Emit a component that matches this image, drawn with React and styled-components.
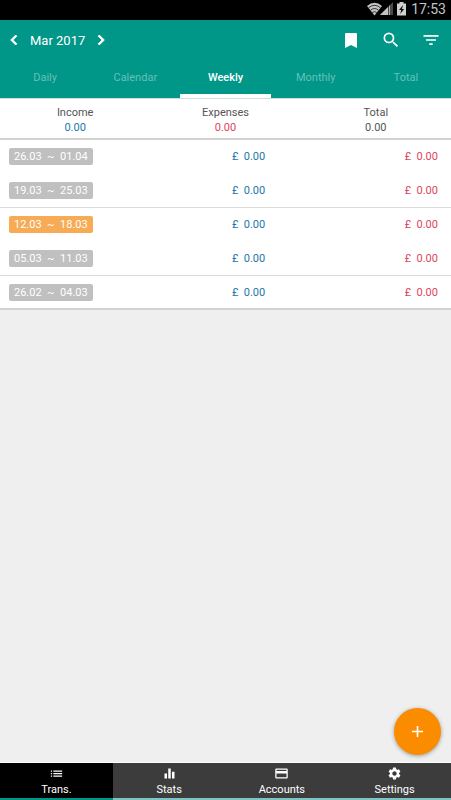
import React, { useState } from "react";
import styled, { createGlobalStyle } from "styled-components";
import {
  MdAdd,
  MdChevronLeft,
  MdChevronRight,
  MdCreditCard,
  MdEqualizer,
  MdFilterList,
  MdList,
  MdSearch,
  MdSettings,
} from "react-icons/md";

const GlobalStyle = createGlobalStyle`
  * {
    box-sizing: border-box;
  }

  body {
    margin: 0;
    background: #efefef;
    color: #555;
    font-family: Roboto, "Liberation Sans", sans-serif;
    font-size: 11px;
  }

  button {
    padding: 0;
    border: 0;
    background: none;
    color: inherit;
    font: inherit;
    cursor: pointer;
  }
`;

const Page = styled.div`
  display: flex;
  flex-direction: column;
  min-height: 100vh;
`;

const StatusBar = styled.div`
  display: flex;
  align-items: center;
  justify-content: flex-end;
  height: 20px;
  padding: 0 5px 2px 0;
  background: #000;
  color: #c4c4c4;
  font-size: 14px;

  svg {
    display: block;
  }
`;

const Clock = styled.time`
  margin-left: 4px;
`;

const Header = styled.header`
  background: #009688;
  color: #fff;
  border-bottom: 1px solid #cfdfdc;
`;

const Toolbar = styled.div`
  display: flex;
  align-items: center;
  justify-content: space-between;
  height: 40px;
  padding: 0 10px 0 4px;
`;

const MonthPicker = styled.div`
  display: flex;
  align-items: center;
  gap: 6px;
  font-size: 13px;

  path:last-child {
    stroke: #fff;
    stroke-width: 1;
  }
`;

const Actions = styled.div`
  display: flex;
  gap: 20px;
`;

const IconButton = styled.button`
  display: flex;
  align-items: center;
  justify-content: center;
  width: 20px;
  height: 20px;
  font-size: 20px;

  svg {
    flex: none;
  }
`;

const Tabs = styled.nav`
  display: grid;
  grid-template-columns: repeat(5, 1fr);
`;

const Tab = styled.button`
  height: 38px;
  border-bottom: 4px solid ${(props) => (props.$active ? "#fff" : "transparent")};
  color: ${(props) => (props.$active ? "#fff" : "#66c0b8")};
  font-weight: ${(props) => (props.$active ? 500 : 400)};
`;

const Summary = styled.dl`
  display: grid;
  grid-template-columns: repeat(3, 1fr);
  height: 41px;
  margin: 0;
  padding-top: 6px;
  background: #fff;
  border-bottom: 2px solid #d2d2d2;
  line-height: 15px;
  text-align: center;

  dd {
    margin: 0;
  }
`;

const Amount = styled.span`
  color: ${(props) => props.$color};
  text-align: right;
  white-space: pre;
`;

const Weeks = styled.ul`
  margin: 0;
  padding: 0;
  background: #fff;
  border-bottom: 2px solid #d2d2d2;
  list-style: none;
`;

const Week = styled.li`
  display: grid;
  grid-template-columns: 3fr 2fr;
  column-gap: 2px;
  align-items: center;
  height: 34px;
  padding: 0 13px 0 9px;
  border-bottom: 1px solid ${(props) => (props.$line ? "#dcdcdc" : "#fff")};

  &:last-child {
    height: 32px;
    border-bottom: 0;
  }
`;

const WeekInfo = styled.div`
  display: flex;
  align-items: center;
  justify-content: space-between;
`;

const Range = styled.span`
  padding: 0 5px;
  border-radius: 2px;
  background: ${(props) => (props.$current ? "#f6ab54" : "#c0c0c0")};
  color: #fff;
  line-height: 17px;
  white-space: pre;
`;

const Footer = styled.footer`
  position: sticky;
  bottom: 0;
  margin-top: auto;
`;

const AddButton = styled.button`
  position: absolute;
  right: 10px;
  bottom: 45px;
  display: flex;
  align-items: center;
  justify-content: center;
  width: 47px;
  height: 47px;
  border-radius: 50%;
  background: #fb8c00;
  box-shadow: 0 1px 4px rgba(0, 0, 0, 0.35);
  color: #fff;
  font-size: 19px;
`;

const BottomNav = styled.nav`
  display: grid;
  grid-template-columns: repeat(4, 1fr);
  border-top: 1px solid #fff;
`;

const NavItem = styled.button`
  display: flex;
  flex-direction: column;
  align-items: center;
  gap: 1px;
  height: 37px;
  padding-top: 3px;
  border-bottom: 2px solid ${(props) => (props.$active ? "#009688" : "#7fc4c4")};
  background: ${(props) => (props.$active ? "#000" : "#3c3c3c")};
  color: #fff;
  line-height: 16px;

  svg {
    flex: none;
    font-size: 15px;
  }
`;

const BLUE = "#2277ab";
const RED = "#dc4560";

const tabs = ["Daily", "Calendar", "Weekly", "Monthly", "Total"];

const totals = [
  { label: "Income", value: "0.00", color: BLUE },
  { label: "Expenses", value: "0.00", color: RED },
  { label: "Total", value: "0.00", color: "#555" },
];

const weeks = [
  { from: "26.03", to: "01.04" },
  { from: "19.03", to: "25.03", line: true },
  { from: "12.03", to: "18.03", current: true },
  { from: "05.03", to: "11.03", line: true },
  { from: "26.02", to: "04.03" },
];

const navItems = [
  { label: "Trans.", Icon: MdList },
  { label: "Stats", Icon: MdEqualizer },
  { label: "Accounts", Icon: MdCreditCard },
  { label: "Settings", Icon: MdSettings },
];

function StatusIcons() {
  return (
    <svg width="40" height="14" viewBox="0 0 40 14" aria-hidden="true">
      {/* wifi */}
      <path d="M0 4Q7.5 -2.5 15 4L7.5 13.5Z" fill="#c4c4c4" />
      <path
        d="M1.5 5.8Q7.5 .8 13.5 5.8M3.5 8.2Q7.5 4.8 11.5 8.2M5.2 10.5Q7.5 8.8 9.8 10.5"
        fill="none"
        stroke="#222"
        strokeWidth="0.9"
      />
      {/* signal */}
      <path d="M26 0V13H13Z" fill="#4a4a4a" />
      <path d="M21 5V13H13Z" fill="#c4c4c4" />
      <path d="M22.5 3.5V13" stroke="#aaa" strokeWidth="1" />
      {/* battery */}
      <path d="M32.5 0h4v1.5h2.5V13.5h-9V1.5h2.5Z" fill="#d0d0d0" />
      <path d="M36 3L32 8h2.2l-1 4L37.2 7H35Z" fill="#111" />
    </svg>
  );
}

function BookmarkIcon() {
  return (
    <svg width="12" height="15" viewBox="0 0 12 15" aria-hidden="true">
      <path d="M1 0h10q1 0 1 1v14l-6-3-6 3V1q0-1 1-1Z" fill="currentColor" />
    </svg>
  );
}

export default function App() {
  const [activeTab, setActiveTab] = useState("Weekly");
  const [activeNav, setActiveNav] = useState("Trans.");

  return (
    <Page>
      <GlobalStyle />
      <StatusBar>
        <StatusIcons />
        <Clock>17:53</Clock>
      </StatusBar>

      <Header>
        <Toolbar>
          <MonthPicker>
            <IconButton aria-label="Previous month">
              <MdChevronLeft />
            </IconButton>
            <span>Mar 2017</span>
            <IconButton aria-label="Next month">
              <MdChevronRight />
            </IconButton>
          </MonthPicker>
          <Actions>
            <IconButton aria-label="Bookmarks">
              <BookmarkIcon />
            </IconButton>
            <IconButton aria-label="Search">
              <MdSearch />
            </IconButton>
            <IconButton aria-label="Filter">
              <MdFilterList />
            </IconButton>
          </Actions>
        </Toolbar>
        <Tabs>
          {tabs.map((tab) => (
            <Tab
              key={tab}
              $active={tab === activeTab}
              onClick={() => setActiveTab(tab)}
            >
              {tab}
            </Tab>
          ))}
        </Tabs>
      </Header>

      <Summary>
        {totals.map((item) => (
          <div key={item.label}>
            <dt>{item.label}</dt>
            <dd>
              <Amount $color={item.color}>{item.value}</Amount>
            </dd>
          </div>
        ))}
      </Summary>

      <Weeks>
        {weeks.map((week) => (
          <Week key={week.from} $line={week.line}>
            <WeekInfo>
              <Range $current={week.current}>
                {`${week.from}  ~  ${week.to}`}
              </Range>
              <Amount $color={BLUE}>{"£  0.00"}</Amount>
            </WeekInfo>
            <Amount $color={RED}>{"£  0.00"}</Amount>
          </Week>
        ))}
      </Weeks>

      <Footer>
        <AddButton aria-label="Add transaction">
          <MdAdd />
        </AddButton>
        <BottomNav>
          {navItems.map(({ label, Icon }) => (
            <NavItem
              key={label}
              $active={label === activeNav}
              onClick={() => setActiveNav(label)}
            >
              <Icon />
              {label}
            </NavItem>
          ))}
        </BottomNav>
      </Footer>
    </Page>
  );
}
